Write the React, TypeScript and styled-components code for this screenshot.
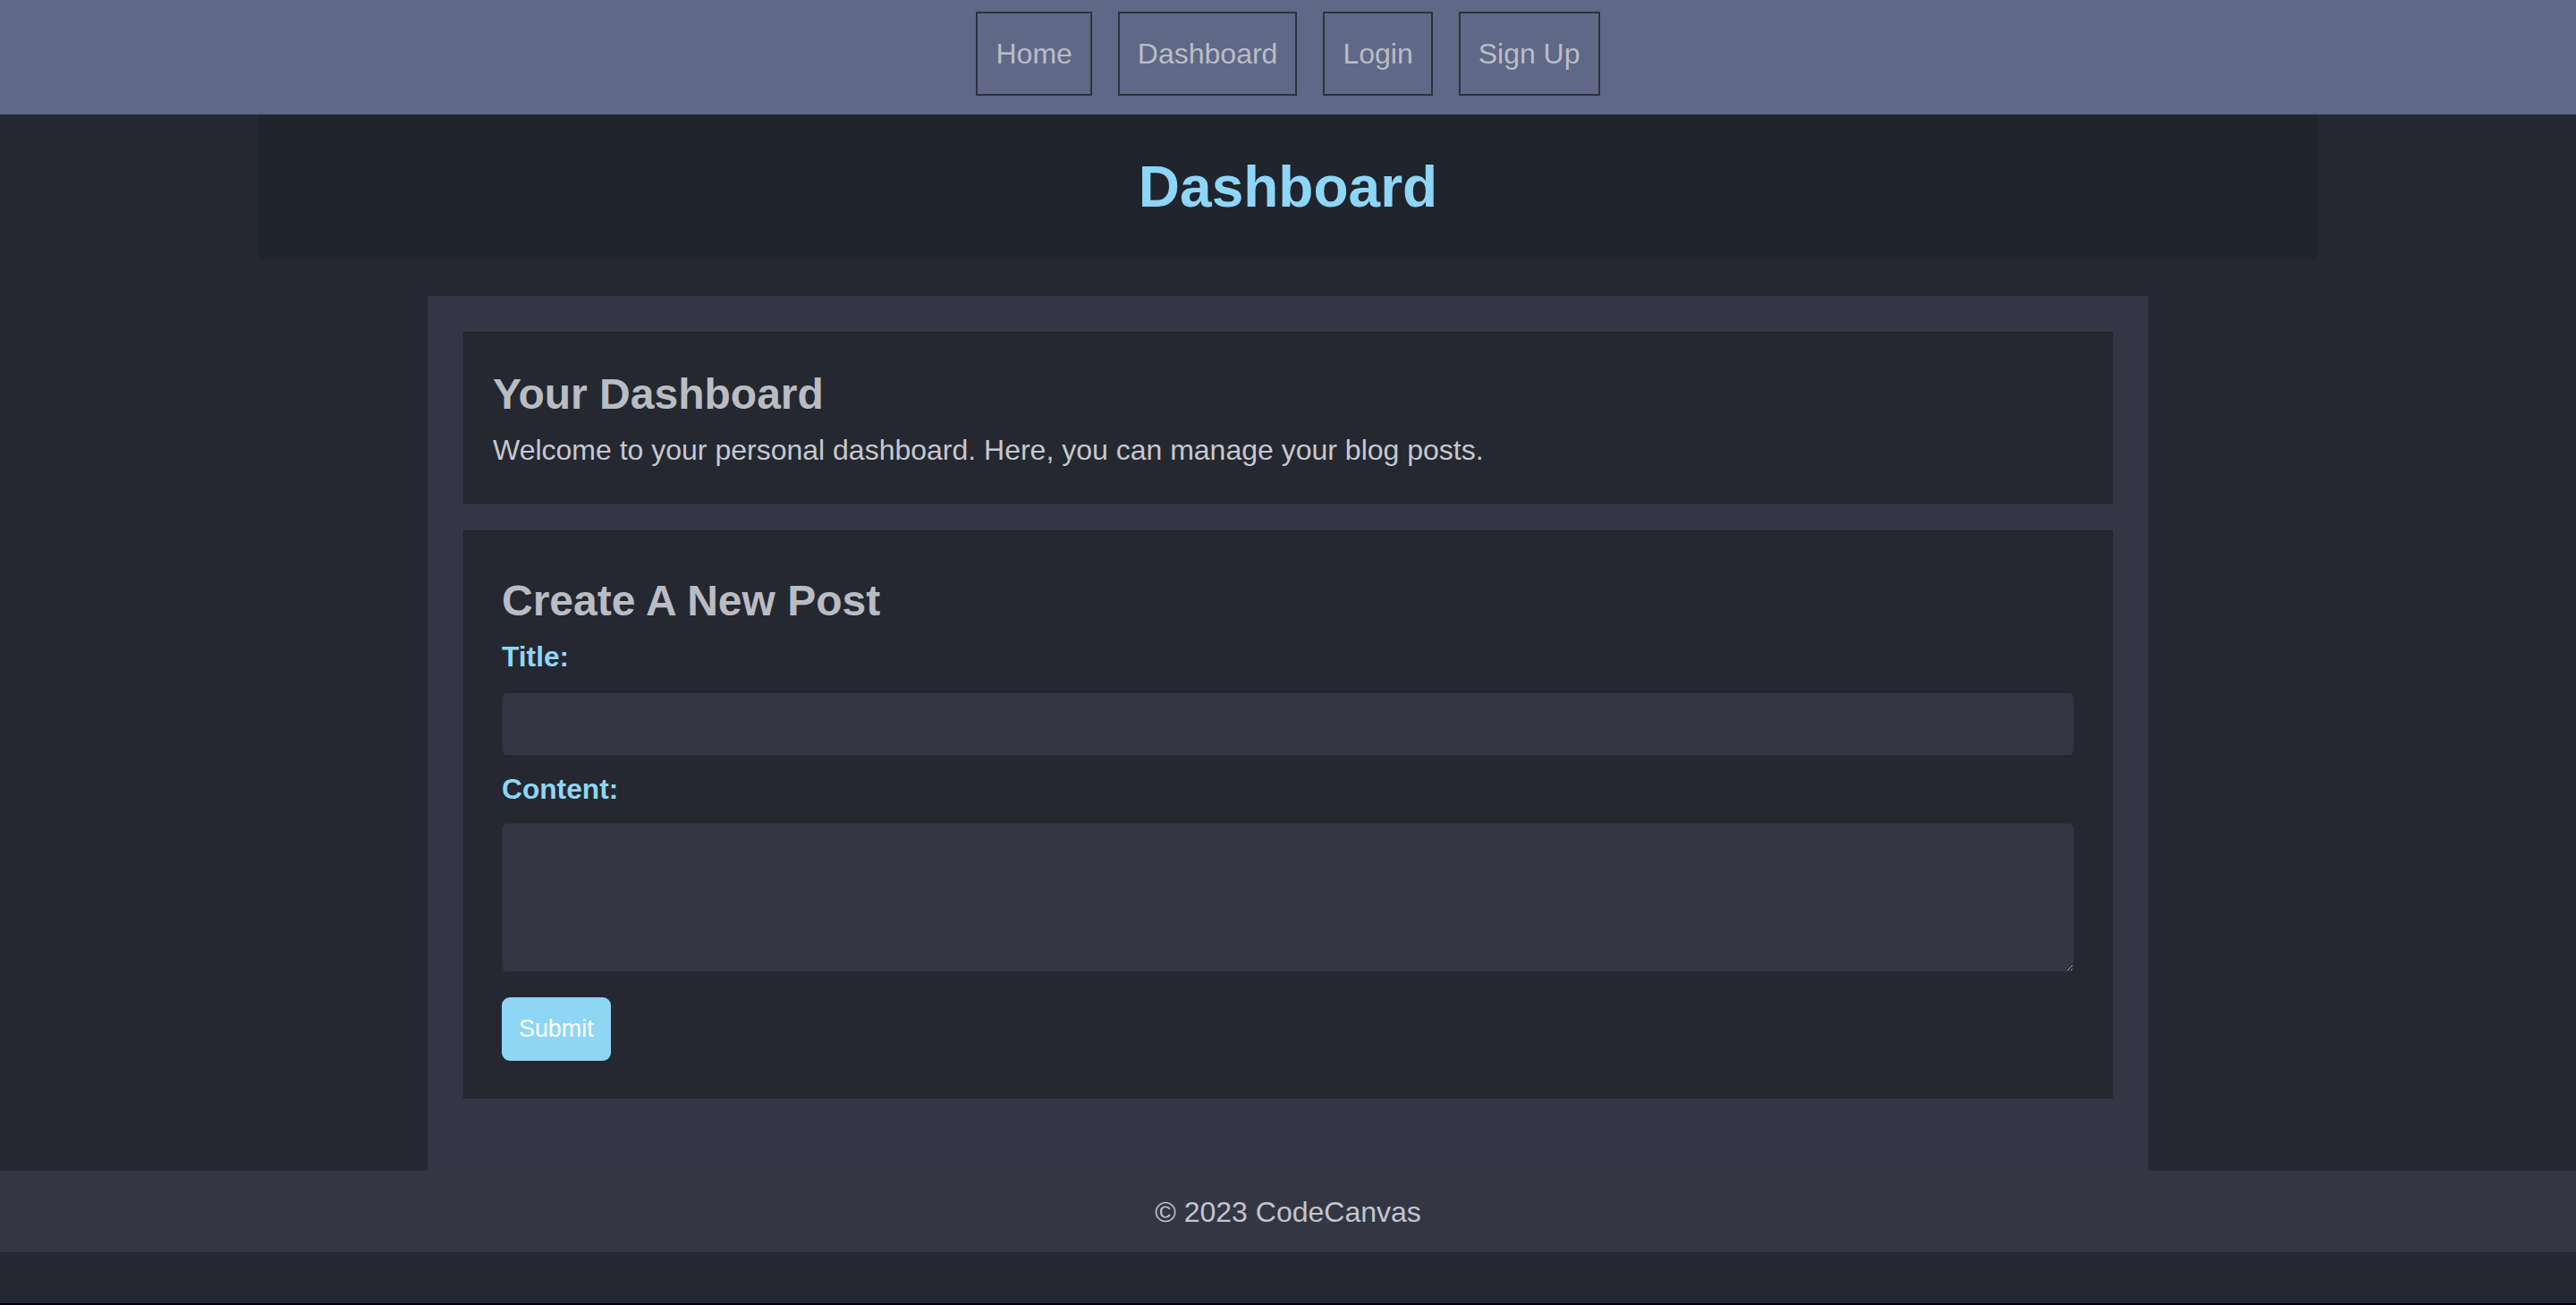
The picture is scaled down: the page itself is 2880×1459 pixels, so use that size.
import styled, { createGlobalStyle } from 'styled-components';

const GlobalStyle = createGlobalStyle`
  html {
    background: #000;
  }

  body {
    margin: 0;
    min-height: calc(100vh - 2px);
    background: #252832;
    font-family: 'Liberation Sans', Arial, sans-serif;
  }

  * {
    box-sizing: border-box;
  }
`;

const navItems = ['Home', 'Dashboard', 'Login', 'Sign Up'];

const App = () => {
  return (
    <>
      <GlobalStyle />
      <Nav>
        {navItems.map((item) => (
          <NavLink key={item} href="#">
            {item}
          </NavLink>
        ))}
      </Nav>

      <PageHeader>
        <PageTitle>Dashboard</PageTitle>
      </PageHeader>

      <Main>
        <Card>
          <CardTitle>Your Dashboard</CardTitle>
          <Intro>Welcome to your personal dashboard. Here, you can manage your blog posts.</Intro>
        </Card>

        <Card>
          <PostForm onSubmit={(e) => e.preventDefault()}>
            <CardTitle>Create A New Post</CardTitle>
            <Label htmlFor="title">Title:</Label>
            <TextInput id="title" type="text" />
            <Label htmlFor="content" $gap={20}>
              Content:
            </Label>
            <TextArea id="content" />
            <SubmitButton type="submit">Submit</SubmitButton>
          </PostForm>
        </Card>
      </Main>

      <Footer>© 2023 CodeCanvas</Footer>
    </>
  );
};

export default App;

const Nav = styled.nav`
  display: flex;
  justify-content: center;
  gap: 29px;

  padding: 13px 0 21px;
  background: #5f6886;
`;

const NavLink = styled.a`
  display: block;
  padding: 27px 20px;

  border: 2px solid #2e323e;

  font-size: 32px;
  line-height: 36px;
  color: #babdc7;
  text-decoration: none;
`;

const PageHeader = styled.header`
  width: 2302px;
  margin: 0 auto;
  padding: 45px 0 46px;

  background: #20242c;
  text-align: center;
`;

const PageTitle = styled.h1`
  margin: 0;

  font-size: 64px;
  line-height: 72px;
  font-weight: 700;
  color: #8ed6f7;
`;

const Main = styled.main`
  display: flex;
  flex-direction: column;
  gap: 30px;

  width: 1924px;
  margin: 40px auto 0;
  padding: 40px 40px 81px;

  background: #343645;
`;

const Card = styled.section`
  padding: 41px 32px;

  border: 1px solid #1f2129;
  background: #252830;
`;

const CardTitle = styled.h2`
  margin: 0 0 18px;

  font-size: 48px;
  line-height: 55px;
  font-weight: 700;
  color: #babcc4;
`;

const Intro = styled.p`
  margin: -1px 0 0;

  font-size: 32px;
  line-height: 36px;
  color: #c6c8d0;
`;

const PostForm = styled.form`
  display: flex;
  flex-direction: column;
  padding: 9px 10px 0;
`;

const Label = styled.label<{ $gap?: number }>`
  display: block;
  margin-bottom: ${({ $gap }) => $gap ?? 22}px;

  font-size: 31.7px;
  line-height: 35px;
  font-weight: 700;
  color: #8ed6f7;
`;

const TextInput = styled.input`
  width: 100%;
  height: 71px;
  margin-bottom: 20px;
  padding: 0 18px;

  border: 1px solid #2a2c37;
  border-radius: 6px;
  background: #343644;

  font-family: inherit;
  font-size: 32px;
  color: #c6c8d0;
  outline: none;
`;

const TextArea = styled.textarea`
  width: 100%;
  height: 167px;
  margin-bottom: 28px;
  padding: 18px;

  border: 1px solid #2a2c37;
  border-radius: 6px;
  background: #343644;
  color-scheme: dark;

  font-family: inherit;
  font-size: 32px;
  color: #c6c8d0;
  outline: none;
`;

const SubmitButton = styled.button`
  align-self: flex-start;
  height: 71px;
  padding: 0 19px;

  border: none;
  border-radius: 9px;
  background: #8fd6f5;

  cursor: pointer;

  font-family: inherit;
  font-size: 26.88px;
  color: #fff;
`;

const Footer = styled.footer`
  padding: 28px 0 27px;

  background: #343644;

  text-align: center;
  font-size: 32px;
  line-height: 36px;
  color: #c3c5cd;
`;
